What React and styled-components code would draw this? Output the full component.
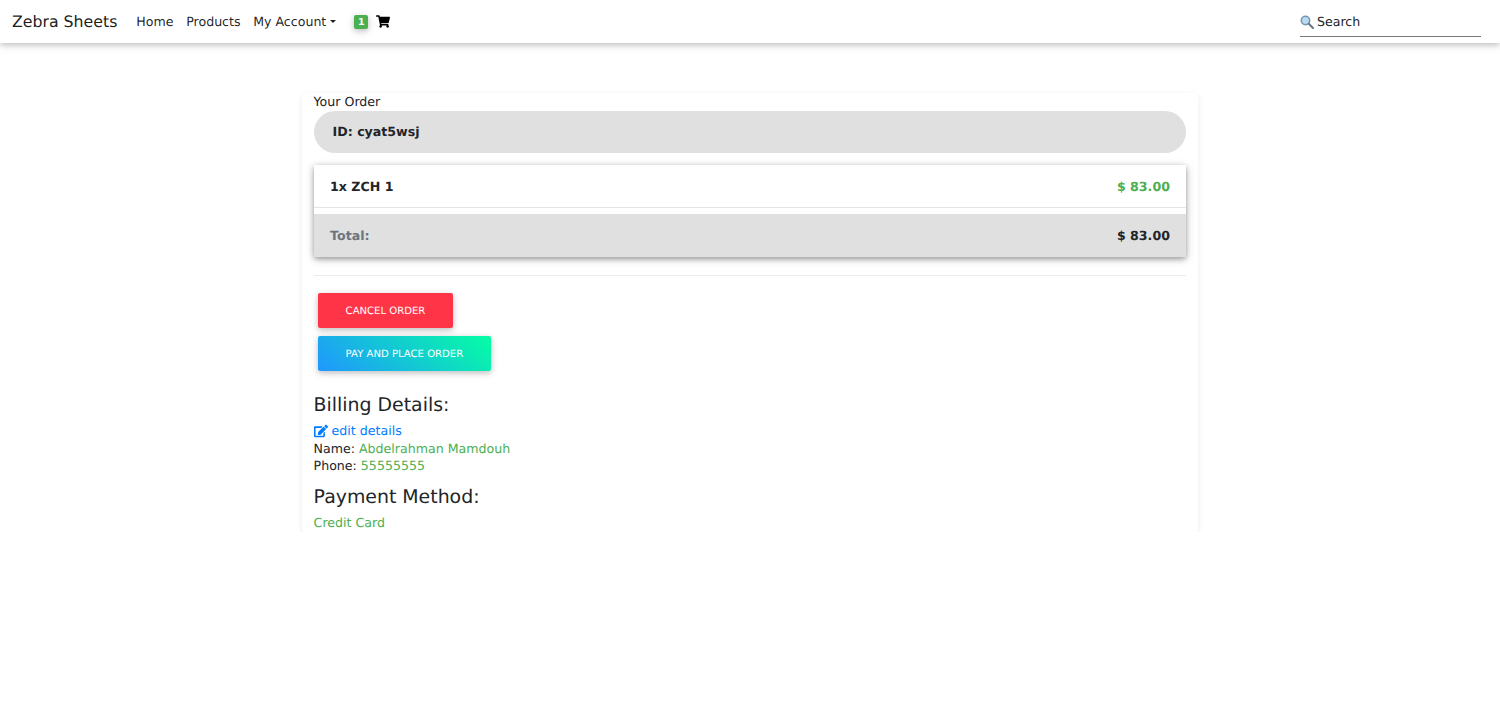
import React from "react"
import styled, { createGlobalStyle } from "styled-components"
import { FaShoppingCart, FaEdit } from "react-icons/fa"

const colors = {
  dark: "#212529",
  green: "#4caf50",
  blue: "#007bff",
  grey: "#e0e0e0",
  muted: "#6c757d"
}

const GlobalStyle = createGlobalStyle`
  html, body {
    margin: 0;
    padding: 0;
    background: #fff;
    color: ${colors.dark};
    font-family: "DejaVu Sans", sans-serif;
    font-size: 12.6px;
    line-height: 17.8px;
    text-rendering: geometricPrecision;
  }
  * {
    box-sizing: border-box;
  }
`

const Navbar = styled.nav`
  height: 43px;
  padding: 0 19px 0 12px;
  display: flex;
  align-items: center;
  background: #fff;
  box-shadow: 0 2px 5px 0 rgba(0, 0, 0, 0.16), 0 2px 10px 0 rgba(0, 0, 0, 0.12);
`

const Brand = styled.a`
  font-size: 15.75px;
  color: rgba(0, 0, 0, 0.9);
  margin-right: 19px;
`

const NavLink = styled.a`
  color: rgba(0, 0, 0, 0.87);
  margin-right: 12.6px;
  display: flex;
  align-items: center;
`

const Caret = styled.span`
  margin-left: 3.5px;
  border-top: 3.6px solid;
  border-left: 3.2px solid transparent;
  border-right: 3.2px solid transparent;
`

const Badge = styled.span`
  margin-left: 6px;
  width: 14px;
  height: 14px;
  border-radius: 2px;
  background: ${colors.green};
  color: #fff;
  font-size: 9.5px;
  font-weight: 700;
  line-height: 15px;
  text-align: center;
  box-shadow: 0 2px 5px 0 rgba(0, 0, 0, 0.16), 0 2px 10px 0 rgba(0, 0, 0, 0.12);
`

const Cart = styled(FaShoppingCart)`
  margin-left: 8px;
  width: 14px;
  height: 13px;
  color: #000;
`

const SearchBox = styled.div`
  margin-left: auto;
  margin-top: 1px;
  width: 181px;
  height: 29px;
  display: flex;
  align-items: center;
  gap: 3px;
  border-bottom: 1px solid #7a7a7a;
`

const SearchLabel = styled.span`
  color: ${colors.dark};
`

const Page = styled.main`
  width: 896px;
  margin: 50px auto 0;
  padding: 0 11.6px;
  border-radius: 4px;
  box-shadow: 0 2px 5px 0 rgba(0, 0, 0, 0.05), 0 2px 10px 0 rgba(0, 0, 0, 0.04);
`

const IdPill = styled.div`
  height: 42px;
  padding: 0 19px;
  display: flex;
  align-items: center;
  border-radius: 21px;
  background: ${colors.grey};
  font-weight: 700;
  margin-bottom: 12px;
`

const Summary = styled.ul`
  list-style: none;
  margin: 0;
  padding: 0;
  border-radius: 2px;
  box-shadow: 0 2px 5px 0 rgba(0, 0, 0, 0.26), 0 2px 10px 0 rgba(0, 0, 0, 0.22);
`

const SummaryRow = styled.li`
  height: 43px;
  padding: ${({ $total }) => ($total ? "1px" : "2px")} 16.5px 0;
  display: flex;
  align-items: center;
  justify-content: space-between;
  font-weight: 700;
  background: ${({ $total }) => ($total ? colors.grey : "#fff")};
  border-bottom: ${({ $total }) => ($total ? "none" : "1px solid #e4e4e4")};
  margin-bottom: ${({ $total }) => ($total ? "0" : "6px")};
`

const Label = styled.span`
  color: ${({ color }) => color || "inherit"};
`

const Divider = styled.hr`
  border: 0;
  border-top: 1px solid rgba(0, 0, 0, 0.08);
  margin: 18px 0 17px;
`

const Buttons = styled.div`
  display: flex;
  flex-direction: column;
  align-items: flex-start;
  gap: 8px;
  padding-left: 4.5px;
  margin-bottom: 22px;
`

const Button = styled.button`
  height: 35px;
  padding: 2px 27.5px 0;
  border: 0;
  border-radius: 2px;
  color: #fff;
  font-family: inherit;
  font-size: 10.08px;
  text-transform: uppercase;
  text-rendering: geometricPrecision;
  background: ${({ $pay }) =>
    $pay ? "linear-gradient(40deg, #2096ff, #05ffa3)" : "#ff3547"};
  box-shadow: 0 2px 5px 0 rgba(0, 0, 0, 0.16), 0 2px 10px 0 rgba(0, 0, 0, 0.12);
`

const Heading = styled.h4`
  margin: 0 0 4px;
  font-size: 18.9px;
  font-weight: 400;
  line-height: 25px;
`

const EditLink = styled.a`
  color: ${colors.blue};
  display: flex;
  align-items: center;
  gap: 4px;
`

const Green = styled.span`
  color: ${colors.green};
`

const Details = styled.div`
  margin-bottom: 10px;
`

function SearchGlyph() {
  return (
    <svg width="14" height="14" viewBox="0 0 14 14">
      <circle cx="5.5" cy="5.5" r="4.2" fill="#bcd9ee" stroke="#6f97b5" strokeWidth="1.5" />
      <path d="M8.8 8.8 13 13" stroke="#6b7780" strokeWidth="2" strokeLinecap="round" />
    </svg>
  )
}

export default function App() {
  return (
    <>
      <GlobalStyle />
      <Navbar>
        <Brand>Zebra Sheets</Brand>
        <NavLink>Home</NavLink>
        <NavLink>Products</NavLink>
        <NavLink>
          My Account
          <Caret />
        </NavLink>
        <Badge>1</Badge>
        <Cart />
        <SearchBox>
          <SearchGlyph />
          <SearchLabel>Search</SearchLabel>
        </SearchBox>
      </Navbar>
      <Page>
        <div>Your Order</div>
        <IdPill>ID: cyat5wsj</IdPill>
        <Summary>
          <SummaryRow>
            <span>1x ZCH 1</span>
            <Label color={colors.green}>$ 83.00</Label>
          </SummaryRow>
          <SummaryRow $total>
            <Label color={colors.muted}>Total:</Label>
            <span>$ 83.00</span>
          </SummaryRow>
        </Summary>
        <Divider />
        <Buttons>
          <Button>Cancel Order</Button>
          <Button $pay>Pay and Place Order</Button>
        </Buttons>
        <Heading>Billing Details:</Heading>
        <Details>
          <EditLink>
            <FaEdit size={14} />
            edit details
          </EditLink>
          <div>
            Name: <Green>Abdelrahman Mamdouh</Green>
          </div>
          <div>
            Phone: <Green>55555555</Green>
          </div>
        </Details>
        <Heading>Payment Method:</Heading>
        <Green>Credit Card</Green>
      </Page>
    </>
  )
}
